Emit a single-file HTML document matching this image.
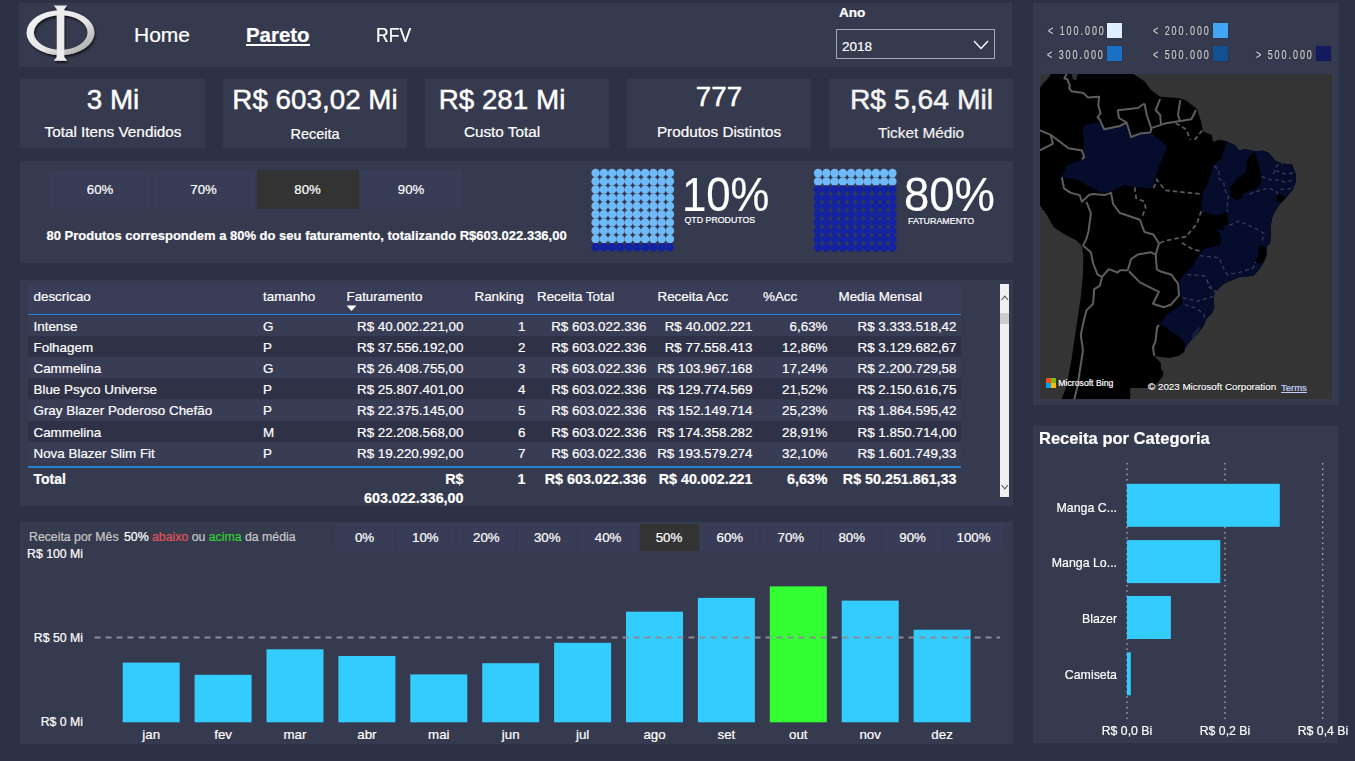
<!DOCTYPE html>
<html><head><meta charset="utf-8">
<style>
*{margin:0;padding:0;box-sizing:border-box}
html,body{width:1355px;height:761px;overflow:hidden;background:#2d3145;font-family:"Liberation Sans",sans-serif;color:#fff}
.a{position:absolute}
.p{position:absolute;background:#363a4e}
.t{position:absolute;white-space:nowrap;line-height:1;-webkit-text-stroke:0.2px currentColor}
.kv{font-size:27.8px;text-align:center;width:300px;-webkit-text-stroke:0.45px #fff}
.kl{font-size:15.3px;text-align:center;width:300px}
.btn{position:absolute;background:#393c56;font-size:13.2px;text-align:center;color:#fff;-webkit-text-stroke:0.2px currentColor}
.sel{background:#333333}
.tb{position:absolute;font-size:13.4px;line-height:1;white-space:nowrap;-webkit-text-stroke:0.2px currentColor}
.r{text-align:right}
</style></head><body>

<!-- header -->
<div class="p" style="left:19px;top:3px;width:993px;height:64px"></div>
<svg class="a" style="left:19px;top:0px" width="90" height="70" viewBox="19 0 90 70">
  <defs>
    <linearGradient id="lg" x1="0" y1="0" x2="1" y2="1">
      <stop offset="0" stop-color="#f4f4f4"/><stop offset="0.55" stop-color="#e6e6e6"/><stop offset="1" stop-color="#9a9a9a"/>
    </linearGradient>
    <filter id="sh" x="-20%" y="-20%" width="140%" height="140%"><feGaussianBlur in="SourceAlpha" stdDeviation="1.2"/><feOffset dx="1" dy="1.5"/><feComponentTransfer><feFuncA type="linear" slope="0.7"/></feComponentTransfer><feMerge><feMergeNode/><feMergeNode in="SourceGraphic"/></feMerge></filter>
  </defs>
  <g filter="url(#sh)">
  <path fill-rule="evenodd" fill="url(#lg)" d="M26.5 32.7 a34 22.5 0 1 0 68 0 a34 22.5 0 1 0 -68 0 Z M33.8 32.5 a26.9 17.3 0 1 1 53.8 0 a26.9 17.3 0 1 1 -53.8 0 Z"/>
  <rect x="56.8" y="8" width="7.4" height="50" fill="#ececec"/>
  <path d="M53.8 5.5 h13.4 l-2.6 3.2 h-8.2 z M53.8 60.7 h13.4 l-2.6 -3.2 h-8.2 z" fill="#ececec"/>
  </g>
</svg>
<div class="t" style="left:134px;top:24px;font-size:21px">Home</div>
<div class="t" style="left:246px;top:24.8px;font-size:20.4px;font-weight:bold">Pareto</div>
<div class="a" style="left:246px;top:43.9px;width:64px;height:1.8px;background:#fff"></div>
<div class="t" style="left:376px;top:24.8px;font-size:20.4px;transform:scaleX(0.86);transform-origin:left">RFV</div>
<div class="t" style="left:839px;top:6px;font-size:13.6px;font-weight:bold">Ano</div>
<div class="a" style="left:836px;top:29px;width:159px;height:30px;border:1.5px solid #a9a9b0"></div>
<div class="t" style="left:842px;top:40px;font-size:13.5px">2018</div>
<svg class="a" style="left:972px;top:39px" width="18" height="12"><path d="M2 2 L9 9.5 L16 2" fill="none" stroke="#fff" stroke-width="1.4"/></svg>

<!-- KPI cards -->
<div class="p" style="left:20px;top:79px;width:185px;height:69px"></div>
<div class="p" style="left:223px;top:79px;width:184px;height:69px"></div>
<div class="p" style="left:425px;top:79px;width:184px;height:69px"></div>
<div class="p" style="left:627px;top:79px;width:184px;height:69px"></div>
<div class="p" style="left:829px;top:79px;width:184px;height:69px"></div>

<div class="t kv" style="left:-37px;top:86px">3 Mi</div>
<div class="t kl" style="left:-37px;top:124px">Total Itens Vendidos</div>
<div class="t kv" style="left:165px;top:86px">R$ 603,02 Mi</div>
<div class="t kl" style="left:165px;top:127px;font-size:14.5px">Receita</div>
<div class="t kv" style="left:352px;top:86px">R$ 281 Mi</div>
<div class="t kl" style="left:352px;top:124px">Custo Total</div>
<div class="t kv" style="left:569px;top:83px">777</div>
<div class="t kl" style="left:569px;top:124px">Produtos Distintos</div>
<div class="t kv" style="left:771.5px;top:85.3px;color:#f2f2f2;font-size:28.3px">R$ 5,64 Mil</div>
<div class="t kl" style="left:771px;top:125px;color:#f2f2f2">Ticket Médio</div>

<!-- pareto panel -->
<div class="p" style="left:20px;top:161px;width:993px;height:102px"></div>
<div class="btn" style="left:49px;top:170px;width:102px;height:39px;line-height:39px">60%</div>
<div class="btn" style="left:152.5px;top:170px;width:102px;height:39px;line-height:39px">70%</div>
<div class="btn sel" style="left:256.5px;top:170px;width:102px;height:39px;line-height:39px">80%</div>
<div class="btn" style="left:360px;top:170px;width:102px;height:39px;line-height:39px">90%</div>
<div class="t" style="left:46.5px;top:229px;font-size:13px;font-weight:bold">80 Produtos correspondem a 80% do seu faturamento, totalizando R$603.022.336,00</div>

<svg class="a" style="left:0;top:0" width="1355" height="761" viewBox="0 0 1355 761">
<circle cx="595.62" cy="172.93" r="4.25" fill="#6fbaf8"/>
<circle cx="603.88" cy="172.93" r="4.25" fill="#6fbaf8"/>
<circle cx="612.12" cy="172.93" r="4.25" fill="#6fbaf8"/>
<circle cx="620.38" cy="172.93" r="4.25" fill="#6fbaf8"/>
<circle cx="628.62" cy="172.93" r="4.25" fill="#6fbaf8"/>
<circle cx="636.88" cy="172.93" r="4.25" fill="#6fbaf8"/>
<circle cx="645.12" cy="172.93" r="4.25" fill="#6fbaf8"/>
<circle cx="653.38" cy="172.93" r="4.25" fill="#6fbaf8"/>
<circle cx="661.62" cy="172.93" r="4.25" fill="#6fbaf8"/>
<circle cx="669.88" cy="172.93" r="4.25" fill="#6fbaf8"/>
<circle cx="595.62" cy="181.18" r="4.25" fill="#6fbaf8"/>
<circle cx="603.88" cy="181.18" r="4.25" fill="#6fbaf8"/>
<circle cx="612.12" cy="181.18" r="4.25" fill="#6fbaf8"/>
<circle cx="620.38" cy="181.18" r="4.25" fill="#6fbaf8"/>
<circle cx="628.62" cy="181.18" r="4.25" fill="#6fbaf8"/>
<circle cx="636.88" cy="181.18" r="4.25" fill="#6fbaf8"/>
<circle cx="645.12" cy="181.18" r="4.25" fill="#6fbaf8"/>
<circle cx="653.38" cy="181.18" r="4.25" fill="#6fbaf8"/>
<circle cx="661.62" cy="181.18" r="4.25" fill="#6fbaf8"/>
<circle cx="669.88" cy="181.18" r="4.25" fill="#6fbaf8"/>
<circle cx="595.62" cy="189.43" r="4.25" fill="#6fbaf8"/>
<circle cx="603.88" cy="189.43" r="4.25" fill="#6fbaf8"/>
<circle cx="612.12" cy="189.43" r="4.25" fill="#6fbaf8"/>
<circle cx="620.38" cy="189.43" r="4.25" fill="#6fbaf8"/>
<circle cx="628.62" cy="189.43" r="4.25" fill="#6fbaf8"/>
<circle cx="636.88" cy="189.43" r="4.25" fill="#6fbaf8"/>
<circle cx="645.12" cy="189.43" r="4.25" fill="#6fbaf8"/>
<circle cx="653.38" cy="189.43" r="4.25" fill="#6fbaf8"/>
<circle cx="661.62" cy="189.43" r="4.25" fill="#6fbaf8"/>
<circle cx="669.88" cy="189.43" r="4.25" fill="#6fbaf8"/>
<circle cx="595.62" cy="197.68" r="4.25" fill="#6fbaf8"/>
<circle cx="603.88" cy="197.68" r="4.25" fill="#6fbaf8"/>
<circle cx="612.12" cy="197.68" r="4.25" fill="#6fbaf8"/>
<circle cx="620.38" cy="197.68" r="4.25" fill="#6fbaf8"/>
<circle cx="628.62" cy="197.68" r="4.25" fill="#6fbaf8"/>
<circle cx="636.88" cy="197.68" r="4.25" fill="#6fbaf8"/>
<circle cx="645.12" cy="197.68" r="4.25" fill="#6fbaf8"/>
<circle cx="653.38" cy="197.68" r="4.25" fill="#6fbaf8"/>
<circle cx="661.62" cy="197.68" r="4.25" fill="#6fbaf8"/>
<circle cx="669.88" cy="197.68" r="4.25" fill="#6fbaf8"/>
<circle cx="595.62" cy="205.93" r="4.25" fill="#6fbaf8"/>
<circle cx="603.88" cy="205.93" r="4.25" fill="#6fbaf8"/>
<circle cx="612.12" cy="205.93" r="4.25" fill="#6fbaf8"/>
<circle cx="620.38" cy="205.93" r="4.25" fill="#6fbaf8"/>
<circle cx="628.62" cy="205.93" r="4.25" fill="#6fbaf8"/>
<circle cx="636.88" cy="205.93" r="4.25" fill="#6fbaf8"/>
<circle cx="645.12" cy="205.93" r="4.25" fill="#6fbaf8"/>
<circle cx="653.38" cy="205.93" r="4.25" fill="#6fbaf8"/>
<circle cx="661.62" cy="205.93" r="4.25" fill="#6fbaf8"/>
<circle cx="669.88" cy="205.93" r="4.25" fill="#6fbaf8"/>
<circle cx="595.62" cy="214.18" r="4.25" fill="#6fbaf8"/>
<circle cx="603.88" cy="214.18" r="4.25" fill="#6fbaf8"/>
<circle cx="612.12" cy="214.18" r="4.25" fill="#6fbaf8"/>
<circle cx="620.38" cy="214.18" r="4.25" fill="#6fbaf8"/>
<circle cx="628.62" cy="214.18" r="4.25" fill="#6fbaf8"/>
<circle cx="636.88" cy="214.18" r="4.25" fill="#6fbaf8"/>
<circle cx="645.12" cy="214.18" r="4.25" fill="#6fbaf8"/>
<circle cx="653.38" cy="214.18" r="4.25" fill="#6fbaf8"/>
<circle cx="661.62" cy="214.18" r="4.25" fill="#6fbaf8"/>
<circle cx="669.88" cy="214.18" r="4.25" fill="#6fbaf8"/>
<circle cx="595.62" cy="222.43" r="4.25" fill="#6fbaf8"/>
<circle cx="603.88" cy="222.43" r="4.25" fill="#6fbaf8"/>
<circle cx="612.12" cy="222.43" r="4.25" fill="#6fbaf8"/>
<circle cx="620.38" cy="222.43" r="4.25" fill="#6fbaf8"/>
<circle cx="628.62" cy="222.43" r="4.25" fill="#6fbaf8"/>
<circle cx="636.88" cy="222.43" r="4.25" fill="#6fbaf8"/>
<circle cx="645.12" cy="222.43" r="4.25" fill="#6fbaf8"/>
<circle cx="653.38" cy="222.43" r="4.25" fill="#6fbaf8"/>
<circle cx="661.62" cy="222.43" r="4.25" fill="#6fbaf8"/>
<circle cx="669.88" cy="222.43" r="4.25" fill="#6fbaf8"/>
<circle cx="595.62" cy="230.68" r="4.25" fill="#6fbaf8"/>
<circle cx="603.88" cy="230.68" r="4.25" fill="#6fbaf8"/>
<circle cx="612.12" cy="230.68" r="4.25" fill="#6fbaf8"/>
<circle cx="620.38" cy="230.68" r="4.25" fill="#6fbaf8"/>
<circle cx="628.62" cy="230.68" r="4.25" fill="#6fbaf8"/>
<circle cx="636.88" cy="230.68" r="4.25" fill="#6fbaf8"/>
<circle cx="645.12" cy="230.68" r="4.25" fill="#6fbaf8"/>
<circle cx="653.38" cy="230.68" r="4.25" fill="#6fbaf8"/>
<circle cx="661.62" cy="230.68" r="4.25" fill="#6fbaf8"/>
<circle cx="669.88" cy="230.68" r="4.25" fill="#6fbaf8"/>
<circle cx="595.62" cy="238.93" r="4.25" fill="#6fbaf8"/>
<circle cx="603.88" cy="238.93" r="4.25" fill="#6fbaf8"/>
<circle cx="612.12" cy="238.93" r="4.25" fill="#6fbaf8"/>
<circle cx="620.38" cy="238.93" r="4.25" fill="#6fbaf8"/>
<circle cx="628.62" cy="238.93" r="4.25" fill="#6fbaf8"/>
<circle cx="636.88" cy="238.93" r="4.25" fill="#6fbaf8"/>
<circle cx="645.12" cy="238.93" r="4.25" fill="#6fbaf8"/>
<circle cx="653.38" cy="238.93" r="4.25" fill="#6fbaf8"/>
<circle cx="661.62" cy="238.93" r="4.25" fill="#6fbaf8"/>
<circle cx="669.88" cy="238.93" r="4.25" fill="#6fbaf8"/>
<circle cx="595.62" cy="247.18" r="4.25" fill="#1222a0"/>
<circle cx="603.88" cy="247.18" r="4.25" fill="#1222a0"/>
<circle cx="612.12" cy="247.18" r="4.25" fill="#1222a0"/>
<circle cx="620.38" cy="247.18" r="4.25" fill="#1222a0"/>
<circle cx="628.62" cy="247.18" r="4.25" fill="#1222a0"/>
<circle cx="636.88" cy="247.18" r="4.25" fill="#1222a0"/>
<circle cx="645.12" cy="247.18" r="4.25" fill="#1222a0"/>
<circle cx="653.38" cy="247.18" r="4.25" fill="#1222a0"/>
<circle cx="661.62" cy="247.18" r="4.25" fill="#1222a0"/>
<circle cx="669.88" cy="247.18" r="4.25" fill="#1222a0"/>
<circle cx="818.12" cy="173.12" r="4.25" fill="#6fbaf8"/>
<circle cx="826.38" cy="173.12" r="4.25" fill="#6fbaf8"/>
<circle cx="834.62" cy="173.12" r="4.25" fill="#6fbaf8"/>
<circle cx="842.88" cy="173.12" r="4.25" fill="#6fbaf8"/>
<circle cx="851.12" cy="173.12" r="4.25" fill="#6fbaf8"/>
<circle cx="859.38" cy="173.12" r="4.25" fill="#6fbaf8"/>
<circle cx="867.62" cy="173.12" r="4.25" fill="#6fbaf8"/>
<circle cx="875.88" cy="173.12" r="4.25" fill="#6fbaf8"/>
<circle cx="884.12" cy="173.12" r="4.25" fill="#6fbaf8"/>
<circle cx="892.38" cy="173.12" r="4.25" fill="#6fbaf8"/>
<circle cx="818.12" cy="181.38" r="4.25" fill="#6fbaf8"/>
<circle cx="826.38" cy="181.38" r="4.25" fill="#6fbaf8"/>
<circle cx="834.62" cy="181.38" r="4.25" fill="#6fbaf8"/>
<circle cx="842.88" cy="181.38" r="4.25" fill="#6fbaf8"/>
<circle cx="851.12" cy="181.38" r="4.25" fill="#6fbaf8"/>
<circle cx="859.38" cy="181.38" r="4.25" fill="#6fbaf8"/>
<circle cx="867.62" cy="181.38" r="4.25" fill="#6fbaf8"/>
<circle cx="875.88" cy="181.38" r="4.25" fill="#6fbaf8"/>
<circle cx="884.12" cy="181.38" r="4.25" fill="#6fbaf8"/>
<circle cx="892.38" cy="181.38" r="4.25" fill="#6fbaf8"/>
<circle cx="818.12" cy="189.62" r="4.25" fill="#1222a0"/>
<circle cx="826.38" cy="189.62" r="4.25" fill="#1222a0"/>
<circle cx="834.62" cy="189.62" r="4.25" fill="#1222a0"/>
<circle cx="842.88" cy="189.62" r="4.25" fill="#1222a0"/>
<circle cx="851.12" cy="189.62" r="4.25" fill="#1222a0"/>
<circle cx="859.38" cy="189.62" r="4.25" fill="#1222a0"/>
<circle cx="867.62" cy="189.62" r="4.25" fill="#1222a0"/>
<circle cx="875.88" cy="189.62" r="4.25" fill="#1222a0"/>
<circle cx="884.12" cy="189.62" r="4.25" fill="#1222a0"/>
<circle cx="892.38" cy="189.62" r="4.25" fill="#1222a0"/>
<circle cx="818.12" cy="197.88" r="4.25" fill="#1222a0"/>
<circle cx="826.38" cy="197.88" r="4.25" fill="#1222a0"/>
<circle cx="834.62" cy="197.88" r="4.25" fill="#1222a0"/>
<circle cx="842.88" cy="197.88" r="4.25" fill="#1222a0"/>
<circle cx="851.12" cy="197.88" r="4.25" fill="#1222a0"/>
<circle cx="859.38" cy="197.88" r="4.25" fill="#1222a0"/>
<circle cx="867.62" cy="197.88" r="4.25" fill="#1222a0"/>
<circle cx="875.88" cy="197.88" r="4.25" fill="#1222a0"/>
<circle cx="884.12" cy="197.88" r="4.25" fill="#1222a0"/>
<circle cx="892.38" cy="197.88" r="4.25" fill="#1222a0"/>
<circle cx="818.12" cy="206.12" r="4.25" fill="#1222a0"/>
<circle cx="826.38" cy="206.12" r="4.25" fill="#1222a0"/>
<circle cx="834.62" cy="206.12" r="4.25" fill="#1222a0"/>
<circle cx="842.88" cy="206.12" r="4.25" fill="#1222a0"/>
<circle cx="851.12" cy="206.12" r="4.25" fill="#1222a0"/>
<circle cx="859.38" cy="206.12" r="4.25" fill="#1222a0"/>
<circle cx="867.62" cy="206.12" r="4.25" fill="#1222a0"/>
<circle cx="875.88" cy="206.12" r="4.25" fill="#1222a0"/>
<circle cx="884.12" cy="206.12" r="4.25" fill="#1222a0"/>
<circle cx="892.38" cy="206.12" r="4.25" fill="#1222a0"/>
<circle cx="818.12" cy="214.38" r="4.25" fill="#1222a0"/>
<circle cx="826.38" cy="214.38" r="4.25" fill="#1222a0"/>
<circle cx="834.62" cy="214.38" r="4.25" fill="#1222a0"/>
<circle cx="842.88" cy="214.38" r="4.25" fill="#1222a0"/>
<circle cx="851.12" cy="214.38" r="4.25" fill="#1222a0"/>
<circle cx="859.38" cy="214.38" r="4.25" fill="#1222a0"/>
<circle cx="867.62" cy="214.38" r="4.25" fill="#1222a0"/>
<circle cx="875.88" cy="214.38" r="4.25" fill="#1222a0"/>
<circle cx="884.12" cy="214.38" r="4.25" fill="#1222a0"/>
<circle cx="892.38" cy="214.38" r="4.25" fill="#1222a0"/>
<circle cx="818.12" cy="222.62" r="4.25" fill="#1222a0"/>
<circle cx="826.38" cy="222.62" r="4.25" fill="#1222a0"/>
<circle cx="834.62" cy="222.62" r="4.25" fill="#1222a0"/>
<circle cx="842.88" cy="222.62" r="4.25" fill="#1222a0"/>
<circle cx="851.12" cy="222.62" r="4.25" fill="#1222a0"/>
<circle cx="859.38" cy="222.62" r="4.25" fill="#1222a0"/>
<circle cx="867.62" cy="222.62" r="4.25" fill="#1222a0"/>
<circle cx="875.88" cy="222.62" r="4.25" fill="#1222a0"/>
<circle cx="884.12" cy="222.62" r="4.25" fill="#1222a0"/>
<circle cx="892.38" cy="222.62" r="4.25" fill="#1222a0"/>
<circle cx="818.12" cy="230.88" r="4.25" fill="#1222a0"/>
<circle cx="826.38" cy="230.88" r="4.25" fill="#1222a0"/>
<circle cx="834.62" cy="230.88" r="4.25" fill="#1222a0"/>
<circle cx="842.88" cy="230.88" r="4.25" fill="#1222a0"/>
<circle cx="851.12" cy="230.88" r="4.25" fill="#1222a0"/>
<circle cx="859.38" cy="230.88" r="4.25" fill="#1222a0"/>
<circle cx="867.62" cy="230.88" r="4.25" fill="#1222a0"/>
<circle cx="875.88" cy="230.88" r="4.25" fill="#1222a0"/>
<circle cx="884.12" cy="230.88" r="4.25" fill="#1222a0"/>
<circle cx="892.38" cy="230.88" r="4.25" fill="#1222a0"/>
<circle cx="818.12" cy="239.12" r="4.25" fill="#1222a0"/>
<circle cx="826.38" cy="239.12" r="4.25" fill="#1222a0"/>
<circle cx="834.62" cy="239.12" r="4.25" fill="#1222a0"/>
<circle cx="842.88" cy="239.12" r="4.25" fill="#1222a0"/>
<circle cx="851.12" cy="239.12" r="4.25" fill="#1222a0"/>
<circle cx="859.38" cy="239.12" r="4.25" fill="#1222a0"/>
<circle cx="867.62" cy="239.12" r="4.25" fill="#1222a0"/>
<circle cx="875.88" cy="239.12" r="4.25" fill="#1222a0"/>
<circle cx="884.12" cy="239.12" r="4.25" fill="#1222a0"/>
<circle cx="892.38" cy="239.12" r="4.25" fill="#1222a0"/>
<circle cx="818.12" cy="247.38" r="4.25" fill="#1222a0"/>
<circle cx="826.38" cy="247.38" r="4.25" fill="#1222a0"/>
<circle cx="834.62" cy="247.38" r="4.25" fill="#1222a0"/>
<circle cx="842.88" cy="247.38" r="4.25" fill="#1222a0"/>
<circle cx="851.12" cy="247.38" r="4.25" fill="#1222a0"/>
<circle cx="859.38" cy="247.38" r="4.25" fill="#1222a0"/>
<circle cx="867.62" cy="247.38" r="4.25" fill="#1222a0"/>
<circle cx="875.88" cy="247.38" r="4.25" fill="#1222a0"/>
<circle cx="884.12" cy="247.38" r="4.25" fill="#1222a0"/>
<circle cx="892.38" cy="247.38" r="4.25" fill="#1222a0"/>
</svg>
<div class="t" style="left:681.8px;top:170.7px;font-size:48px;transform:scaleX(0.91);transform-origin:left">10%</div>
<div class="t" style="left:684.5px;top:216px;font-size:8.8px">QTD PRODUTOS</div>
<div class="t" style="left:903.5px;top:170.7px;font-size:48px;transform:scaleX(0.946);transform-origin:left">80%</div>
<div class="t" style="left:908px;top:217px;font-size:8.9px">FATURAMENTO</div>

<!-- table panel -->
<div class="p" style="left:20px;top:279.5px;width:993px;height:226.5px"></div>
<div class="a" style="left:28px;top:284px;width:933px;height:30px;background:#3a3d57"></div>
<div class="a" style="left:28px;top:314.7px;width:933px;height:21.2px;background:#393c55"></div>
<div class="a" style="left:28px;top:335.9px;width:933px;height:21.2px;background:#2f3247"></div>
<div class="a" style="left:28px;top:357.1px;width:933px;height:21.2px;background:#393c55"></div>
<div class="a" style="left:28px;top:378.3px;width:933px;height:21.2px;background:#2f3247"></div>
<div class="a" style="left:28px;top:399.5px;width:933px;height:21.2px;background:#393c55"></div>
<div class="a" style="left:28px;top:420.7px;width:933px;height:21.2px;background:#2f3247"></div>
<div class="a" style="left:28px;top:441.9px;width:933px;height:21.2px;background:#393c55"></div>
<div class="a" style="left:28px;top:313.6px;width:933px;height:1.6px;background:#2583d6"></div>
<div class="a" style="left:28px;top:466.2px;width:933px;height:1.6px;background:#2583d6"></div>
<div class="tb" style="left:33.5px;top:290px">descricao</div>
<div class="tb" style="left:263px;top:290px">tamanho</div>
<div class="tb" style="left:346.5px;top:290px">Faturamento</div>
<div class="tb" style="left:474.5px;top:290px">Ranking</div>
<div class="tb" style="left:537px;top:290px">Receita Total</div>
<div class="tb" style="left:657.5px;top:290px">Receita Acc</div>
<div class="tb" style="left:763px;top:290px">%Acc</div>
<div class="tb" style="left:838.5px;top:290px">Media Mensal</div>
<svg class="a" style="left:346px;top:305px" width="12" height="8"><path d="M0.5 0.5 L10.5 0.5 L5.5 6 Z" fill="#fff"/></svg>
<div class="tb" style="left:33.5px;top:319.6px">Intense</div>
<div class="tb" style="left:263px;top:319.6px">G</div>
<div class="tb r" style="left:263.5px;width:200px;top:319.6px">R$ 40.002.221,00</div>
<div class="tb r" style="left:325.5px;width:200px;top:319.6px">1</div>
<div class="tb r" style="left:446.5px;width:200px;top:319.6px">R$ 603.022.336</div>
<div class="tb r" style="left:552.5px;width:200px;top:319.6px">R$ 40.002.221</div>
<div class="tb r" style="left:627.5px;width:200px;top:319.6px">6,63%</div>
<div class="tb r" style="left:756.5px;width:200px;top:319.6px">R$ 3.333.518,42</div>
<div class="tb" style="left:33.5px;top:340.8px">Folhagem</div>
<div class="tb" style="left:263px;top:340.8px">P</div>
<div class="tb r" style="left:263.5px;width:200px;top:340.8px">R$ 37.556.192,00</div>
<div class="tb r" style="left:325.5px;width:200px;top:340.8px">2</div>
<div class="tb r" style="left:446.5px;width:200px;top:340.8px">R$ 603.022.336</div>
<div class="tb r" style="left:552.5px;width:200px;top:340.8px">R$ 77.558.413</div>
<div class="tb r" style="left:627.5px;width:200px;top:340.8px">12,86%</div>
<div class="tb r" style="left:756.5px;width:200px;top:340.8px">R$ 3.129.682,67</div>
<div class="tb" style="left:33.5px;top:362.0px">Cammelina</div>
<div class="tb" style="left:263px;top:362.0px">G</div>
<div class="tb r" style="left:263.5px;width:200px;top:362.0px">R$ 26.408.755,00</div>
<div class="tb r" style="left:325.5px;width:200px;top:362.0px">3</div>
<div class="tb r" style="left:446.5px;width:200px;top:362.0px">R$ 603.022.336</div>
<div class="tb r" style="left:552.5px;width:200px;top:362.0px">R$ 103.967.168</div>
<div class="tb r" style="left:627.5px;width:200px;top:362.0px">17,24%</div>
<div class="tb r" style="left:756.5px;width:200px;top:362.0px">R$ 2.200.729,58</div>
<div class="tb" style="left:33.5px;top:383.2px">Blue Psyco Universe</div>
<div class="tb" style="left:263px;top:383.2px">P</div>
<div class="tb r" style="left:263.5px;width:200px;top:383.2px">R$ 25.807.401,00</div>
<div class="tb r" style="left:325.5px;width:200px;top:383.2px">4</div>
<div class="tb r" style="left:446.5px;width:200px;top:383.2px">R$ 603.022.336</div>
<div class="tb r" style="left:552.5px;width:200px;top:383.2px">R$ 129.774.569</div>
<div class="tb r" style="left:627.5px;width:200px;top:383.2px">21,52%</div>
<div class="tb r" style="left:756.5px;width:200px;top:383.2px">R$ 2.150.616,75</div>
<div class="tb" style="left:33.5px;top:404.4px">Gray Blazer Poderoso Chefão</div>
<div class="tb" style="left:263px;top:404.4px">P</div>
<div class="tb r" style="left:263.5px;width:200px;top:404.4px">R$ 22.375.145,00</div>
<div class="tb r" style="left:325.5px;width:200px;top:404.4px">5</div>
<div class="tb r" style="left:446.5px;width:200px;top:404.4px">R$ 603.022.336</div>
<div class="tb r" style="left:552.5px;width:200px;top:404.4px">R$ 152.149.714</div>
<div class="tb r" style="left:627.5px;width:200px;top:404.4px">25,23%</div>
<div class="tb r" style="left:756.5px;width:200px;top:404.4px">R$ 1.864.595,42</div>
<div class="tb" style="left:33.5px;top:425.6px">Cammelina</div>
<div class="tb" style="left:263px;top:425.6px">M</div>
<div class="tb r" style="left:263.5px;width:200px;top:425.6px">R$ 22.208.568,00</div>
<div class="tb r" style="left:325.5px;width:200px;top:425.6px">6</div>
<div class="tb r" style="left:446.5px;width:200px;top:425.6px">R$ 603.022.336</div>
<div class="tb r" style="left:552.5px;width:200px;top:425.6px">R$ 174.358.282</div>
<div class="tb r" style="left:627.5px;width:200px;top:425.6px">28,91%</div>
<div class="tb r" style="left:756.5px;width:200px;top:425.6px">R$ 1.850.714,00</div>
<div class="tb" style="left:33.5px;top:446.8px">Nova Blazer Slim Fit</div>
<div class="tb" style="left:263px;top:446.8px">P</div>
<div class="tb r" style="left:263.5px;width:200px;top:446.8px">R$ 19.220.992,00</div>
<div class="tb r" style="left:325.5px;width:200px;top:446.8px">7</div>
<div class="tb r" style="left:446.5px;width:200px;top:446.8px">R$ 603.022.336</div>
<div class="tb r" style="left:552.5px;width:200px;top:446.8px">R$ 193.579.274</div>
<div class="tb r" style="left:627.5px;width:200px;top:446.8px">32,10%</div>
<div class="tb r" style="left:756.5px;width:200px;top:446.8px">R$ 1.601.749,33</div>
<div class="tb" style="left:33.5px;top:472.0px;font-weight:bold;font-size:14px">Total</div>
<div class="tb r" style="left:263.5px;width:200px;top:472.0px;font-weight:bold;font-size:14.3px">R$</div>
<div class="tb r" style="left:325.5px;width:200px;top:472.0px;font-weight:bold;font-size:14.3px">1</div>
<div class="tb r" style="left:446.5px;width:200px;top:472.0px;font-weight:bold;font-size:14.3px">R$ 603.022.336</div>
<div class="tb r" style="left:552.5px;width:200px;top:472.0px;font-weight:bold;font-size:14.3px">R$ 40.002.221</div>
<div class="tb r" style="left:627.5px;width:200px;top:472.0px;font-weight:bold;font-size:14.3px">6,63%</div>
<div class="tb r" style="left:756.5px;width:200px;top:472.0px;font-weight:bold;font-size:14.3px">R$ 50.251.861,33</div>
<div class="tb r" style="left:263.5px;width:200px;top:491.3px;font-weight:bold;font-size:14.3px">603.022.336,00</div>
<div class="a" style="left:1000px;top:284px;width:9.2px;height:213px;background:#f0f0f0"></div>
<div class="a" style="left:1000px;top:313px;width:9.2px;height:11px;background:#cdcdcd"></div>
<svg class="a" style="left:1000px;top:294px" width="10" height="8"><path d="M1.5 6 L4.8 2.2 L8 6" fill="none" stroke="#555" stroke-width="1.1"/></svg>
<svg class="a" style="left:1000px;top:483px" width="10" height="8"><path d="M1.5 2 L4.8 5.8 L8 2" fill="none" stroke="#555" stroke-width="1.1"/></svg>

<!-- chart panel -->
<div class="p" style="left:20px;top:522px;width:993px;height:222px"></div>
<div class="t" style="left:29px;top:531px;font-size:12.3px;color:#c8c8c8">Receita por Mês <span style="color:#fff;margin-left:2px">50%</span> <span style="color:#e0555c">abaixo</span> ou <span style="color:#2fd12f">acima</span> da média</div>
<div class="t" style="left:27px;top:548px;font-size:12.3px">R$ 100 Mi</div>
<div class="t r" style="left:-117px;width:200px;top:632px;font-size:12.3px">R$ 50 Mi</div>
<div class="t r" style="left:-117px;width:200px;top:716px;font-size:12.3px">R$ 0 Mi</div>
<div class="btn" style="left:335.0px;top:524px;width:59px;height:27px;line-height:28px;font-size:13.3px">0%</div>
<div class="btn" style="left:395.9px;top:524px;width:59px;height:27px;line-height:28px;font-size:13.3px">10%</div>
<div class="btn" style="left:456.8px;top:524px;width:59px;height:27px;line-height:28px;font-size:13.3px">20%</div>
<div class="btn" style="left:517.7px;top:524px;width:59px;height:27px;line-height:28px;font-size:13.3px">30%</div>
<div class="btn" style="left:578.6px;top:524px;width:59px;height:27px;line-height:28px;font-size:13.3px">40%</div>
<div class="btn sel" style="left:639.5px;top:524px;width:59px;height:27px;line-height:28px;font-size:13.3px">50%</div>
<div class="btn" style="left:700.4px;top:524px;width:59px;height:27px;line-height:28px;font-size:13.3px">60%</div>
<div class="btn" style="left:761.3px;top:524px;width:59px;height:27px;line-height:28px;font-size:13.3px">70%</div>
<div class="btn" style="left:822.2px;top:524px;width:59px;height:27px;line-height:28px;font-size:13.3px">80%</div>
<div class="btn" style="left:883.1px;top:524px;width:59px;height:27px;line-height:28px;font-size:13.3px">90%</div>
<div class="btn" style="left:944.0px;top:524px;width:59px;height:27px;line-height:28px;font-size:13.3px">100%</div>
<svg class="a" style="left:0;top:0" width="1355" height="761" viewBox="0 0 1355 761">
<rect x="122.7" y="662.6" width="57" height="59.7" fill="#33ccff"/>
<rect x="194.6" y="674.8" width="57" height="47.5" fill="#33ccff"/>
<rect x="266.5" y="649.3" width="57" height="73.0" fill="#33ccff"/>
<rect x="338.4" y="656" width="57" height="66.3" fill="#33ccff"/>
<rect x="410.3" y="674.4" width="57" height="47.9" fill="#33ccff"/>
<rect x="482.2" y="663.2" width="57" height="59.1" fill="#33ccff"/>
<rect x="554.1" y="642.8" width="57" height="79.5" fill="#33ccff"/>
<rect x="626.0" y="611.7" width="57" height="110.6" fill="#33ccff"/>
<rect x="697.9" y="597.9" width="57" height="124.4" fill="#33ccff"/>
<rect x="769.8" y="586.4" width="57" height="135.9" fill="#33ff33"/>
<rect x="841.7" y="600.6" width="57" height="121.7" fill="#33ccff"/>
<rect x="913.6" y="629.7" width="57" height="92.6" fill="#33ccff"/>
<line x1="94.5" y1="637.5" x2="1000" y2="637.5" stroke="#8a8c95" stroke-width="2.2" stroke-dasharray="6 5"/>
</svg>
<div class="t" style="left:101.2px;width:100px;text-align:center;top:728px;font-size:13.3px">jan</div>
<div class="t" style="left:173.1px;width:100px;text-align:center;top:728px;font-size:13.3px">fev</div>
<div class="t" style="left:245.0px;width:100px;text-align:center;top:728px;font-size:13.3px">mar</div>
<div class="t" style="left:316.9px;width:100px;text-align:center;top:728px;font-size:13.3px">abr</div>
<div class="t" style="left:388.8px;width:100px;text-align:center;top:728px;font-size:13.3px">mai</div>
<div class="t" style="left:460.7px;width:100px;text-align:center;top:728px;font-size:13.3px">jun</div>
<div class="t" style="left:532.6px;width:100px;text-align:center;top:728px;font-size:13.3px">jul</div>
<div class="t" style="left:604.5px;width:100px;text-align:center;top:728px;font-size:13.3px">ago</div>
<div class="t" style="left:676.4px;width:100px;text-align:center;top:728px;font-size:13.3px">set</div>
<div class="t" style="left:748.3px;width:100px;text-align:center;top:728px;font-size:13.3px">out</div>
<div class="t" style="left:820.2px;width:100px;text-align:center;top:728px;font-size:13.3px">nov</div>
<div class="t" style="left:892.1px;width:100px;text-align:center;top:728px;font-size:13.3px">dez</div>

<!-- map panel -->
<div class="p" style="left:1033px;top:3px;width:306px;height:402px"></div>
<svg class="a" style="left:0;top:0" width="1355" height="761" viewBox="0 0 1355 761">
<defs><clipPath id="mc"><rect x="1040" y="74" width="292" height="325"/></clipPath></defs>
<g clip-path="url(#mc)">
<rect x="1040" y="74" width="292" height="325" fill="#343434"/>
<polygon points="1040.0,88.0 1042.3,84.2 1047.8,78.7 1051.0,74.0 1133.3,74.0 1144.5,81.2 1151.2,90.1 1160.1,96.8 1178.0,97.9 1185.2,100.0 1196.7,108.4 1200.9,121.0 1203.0,131.5 1211.8,135.0 1213.0,142.1 1218.9,139.7 1226.0,140.9 1228.4,142.1 1235.5,145.6 1239.0,150.4 1244.9,149.2 1252.0,150.4 1256.7,151.5 1262.6,150.4 1268.6,152.7 1275.6,161.0 1282.7,163.4 1292.2,164.6 1295.7,174.0 1295.7,182.3 1292.2,190.6 1285.1,198.8 1280.4,203.6 1275.6,210.6 1272.1,217.7 1270.9,225.0 1271.0,232.0 1270.0,244.0 1266.5,246.0 1267.0,254.0 1264.0,262.0 1259.0,269.4 1253.6,275.7 1238.9,277.3 1225.2,283.1 1220.4,287.1 1214.5,293.0 1213.3,301.3 1214.5,306.0 1212.1,313.1 1206.2,319.0 1203.9,324.9 1199.1,332.0 1190.9,340.3 1184.9,348.6 1184.3,352.1 1179.0,355.7 1169.6,358.0 1160.1,356.9 1154.2,355.7 1160.7,362.8 1161.3,370.0 1163.4,372.0 1162.9,376.0 1158.8,381.5 1154.2,386.1 1146.8,388.0 1130.2,388.0 1130.2,399.0 1061.8,399.0 1066.3,386.4 1070.8,364.1 1074.1,341.7 1077.5,319.4 1080.8,297.0 1083.0,274.7 1083.3,255.7 1082.1,246.2 1076.2,240.3 1065.6,235.0 1053.7,227.3 1047.2,215.5 1040.0,205.4" fill="#000"/>
<polygon points="1071.5,74 1077.8,74 1076,80.2 1073,79" fill="#343434"/>
<polygon points="1084.2,124.7 1099.8,122.5 1104.3,129.2 1119.9,125.9 1126.6,122.5 1131.1,137.0 1140.0,133.6 1150.5,132.6 1167.3,146.2 1154.7,177.7 1153.7,188.2 1134.6,187.3 1124.4,185.1 1111.0,191.8 1102.0,192.9 1088.6,186.2 1077.5,179.5 1061.8,177.3 1066.3,166.1 1081.9,159.4 1084.2,148.2 1083.0,130.3" fill="#060c2c"/>
<polygon points="1218.9,139.7 1226.0,140.9 1228.4,142.1 1235.5,145.6 1239.0,150.4 1244.9,149.2 1252.0,150.4 1256.7,151.5 1262.6,150.4 1268.6,152.7 1275.6,161.0 1282.7,163.4 1292.2,164.6 1295.7,174.0 1295.7,182.3 1292.2,190.6 1285.1,198.8 1280.4,203.6 1275.6,210.6 1272.1,217.7 1270.9,225.0 1271.0,232.0 1270.0,244.0 1266.5,246.0 1267.0,254.0 1264.0,262.0 1259.0,269.4 1253.6,275.7 1238.9,277.3 1225.2,283.1 1220.4,287.1 1214.5,293.0 1213.3,301.3 1214.5,306.0 1212.1,313.1 1206.2,319.0 1203.9,324.9 1199.1,332.0 1190.9,340.3 1184.9,348.6 1184.3,352.1 1184.3,352.1 1184.9,342.7 1177.8,335.6 1169.6,330.9 1163.7,325.5 1158.9,324.9 1167.2,314.3 1174.3,309.6 1182.0,303.7 1181.4,295.4 1177.8,293.0 1180.2,280.0 1182.1,276.8 1192.6,266.3 1198.9,253.6 1205.2,248.4 1220.0,245.2 1221.0,240.0 1220.0,233.7 1215.8,229.5 1224.2,230.5 1223.1,226.3 1228.4,224.2 1227.2,211.8 1217.7,215.4 1202.4,211.8 1201.2,205.9 1202.4,194.1 1208.3,182.3 1213.0,165.7 1221.3,158.6 1223.6,150.4 1227.2,142.1" fill="#060c2c"/>
<polygon points="1254.4,151.5 1256.7,158.6 1259.1,165.7 1261.5,176.4 1260.3,184.6 1254.4,189.4 1247.3,191.7 1242.6,194.1 1241.4,198.8 1235.5,200.0 1230.7,196.5 1229.6,188.2 1235.5,179.9 1243.7,174.0 1246.1,170.5 1247.3,158.6 1249.6,156.3" fill="#000"/>
<polygon points="1276.8,194.1 1282.7,195.3 1285.1,198.8 1281.6,202.4 1276.8,201.2" fill="#000"/>
<polygon points="1258.9,246.3 1263.1,245.2 1266.2,248.4 1266.2,253.6 1263.1,262.0 1258.9,264.2 1254.7,261.0 1257.8,256.8 1258.9,251.5" fill="#000"/>
<ellipse cx="1196" cy="332.5" rx="2" ry="7" transform="rotate(35 1196 332.5)" fill="#151c42"/>
<polyline points="1066.7,73.9 1064.4,78.3 1067.5,79.5 1069.9,85.8 1069.1,88.1 1071.5,91.3 1083.3,92.9 1088.0,97.6 1099.1,96.8 1098.3,105.5 1100.6,113.4 1097.5,117.3 1099.8,119.7 1103.0,126.8 1104.3,129.2 1119.9,125.9 1126.6,122.5 1131.1,137.0 1140.0,133.6 1150.5,132.6" fill="none" stroke="#5e5e5e" stroke-width="2" stroke-linejoin="round"/>
<polyline points="1117.7,110.2 1137.8,108.0 1144.5,103.5" fill="none" stroke="#5e5e5e" stroke-width="2" stroke-linejoin="round"/>
<polyline points="1117.7,110.2 1119.0,118.0 1126.6,122.5" fill="none" stroke="#5e5e5e" stroke-width="2" stroke-linejoin="round"/>
<polyline points="1144.5,103.5 1146.7,114.7 1151.2,128.1 1150.5,132.6" fill="none" stroke="#5e5e5e" stroke-width="2" stroke-linejoin="round"/>
<polyline points="1151.2,128.1 1164.6,123.6 1191.4,119.2 1195.9,110.0" fill="none" stroke="#5e5e5e" stroke-width="2" stroke-linejoin="round"/>
<polyline points="1160.1,99.0 1155.7,110.2 1160.1,114.7 1161.0,124.0" fill="none" stroke="#5e5e5e" stroke-width="2" stroke-linejoin="round"/>
<polyline points="1180.3,100.2 1178.0,114.7 1180.0,121.0" fill="none" stroke="#5e5e5e" stroke-width="2" stroke-linejoin="round"/>
<polyline points="1040.0,130.3 1050.6,134.8 1052.9,143.7 1040.0,150.4" fill="none" stroke="#5e5e5e" stroke-width="2" stroke-linejoin="round"/>
<polyline points="1050.6,134.8 1068.5,148.2 1081.9,150.4 1084.2,157.2 1081.9,159.4" fill="none" stroke="#5e5e5e" stroke-width="2" stroke-linejoin="round"/>
<polyline points="1061.8,177.3 1064.0,188.4 1070.8,192.9 1079.7,195.1 1081.9,201.8 1089.0,195.0 1093.0,194.0 1104.3,195.1 1111.0,192.9 1113.2,204.1 1119.9,213.0 1140.0,219.7 1142.3,226.4 1144.5,232.0 1153.4,234.5 1159.0,243.4 1155.7,254.6" fill="none" stroke="#5e5e5e" stroke-width="2" stroke-linejoin="round"/>
<polyline points="1086.4,201.8 1090.9,213.0 1088.6,230.9 1086.4,238.9 1083.0,245.6" fill="none" stroke="#5e5e5e" stroke-width="2" stroke-linejoin="round"/>
<polyline points="1083.0,245.6 1090.9,252.3 1093.1,263.5 1097.6,274.7 1102.0,276.9 1099.8,285.9 1094.2,289.2 1093.1,303.7 1086.4,310.4 1083.0,323.9 1080.8,335.0 1083.0,350.7 1080.8,364.1 1077.5,386.4 1074.1,400.0" fill="none" stroke="#5e5e5e" stroke-width="2" stroke-linejoin="round"/>
<polyline points="1102.0,276.9 1108.7,269.1 1117.7,272.5 1119.9,270.2 1127.7,270.2 1131.1,259.0 1137.8,254.6 1151.2,252.3 1155.7,254.6 1156.8,269.1 1160.1,271.3 1171.3,274.7 1178.0,283.6 1179.0,295.4 1170.7,304.8 1163.7,307.2 1153.0,303.7 1158.9,291.8 1140.0,282.4 1128.9,271.3" fill="none" stroke="#5e5e5e" stroke-width="2" stroke-linejoin="round"/>
<polyline points="1158.9,324.9 1157.1,327.3 1155.4,341.5 1153.0,347.4 1154.2,355.7" fill="none" stroke="#5e5e5e" stroke-width="2" stroke-linejoin="round"/>
<polyline points="1175.7,123.1 1186.2,129.4 1190.4,139.9" fill="none" stroke="#5a5a5a" stroke-width="1.8" stroke-dasharray="4.5 3"/>
<polyline points="1194.6,139.9 1203.0,129.4" fill="none" stroke="#5a5a5a" stroke-width="1.8" stroke-dasharray="4.5 3"/>
<polyline points="1153.7,188.2 1156.8,179.8 1165.2,190.3 1202.4,194.1" fill="none" stroke="#5a5a5a" stroke-width="1.8" stroke-dasharray="4.5 3"/>
<polyline points="1134.6,187.3 1136.2,198.4 1144.1,201.5 1145.6,207.8 1142.5,215.7" fill="none" stroke="#5a5a5a" stroke-width="1.8" stroke-dasharray="4.5 3"/>
<polyline points="1201.2,211.3 1196.7,224.0 1186.2,236.6 1165.2,240.8 1159.0,243.4" fill="none" stroke="#5a5a5a" stroke-width="1.8" stroke-dasharray="4.5 3"/>
<polyline points="1182.0,242.9 1192.5,249.2 1200.9,251.3" fill="none" stroke="#5a5a5a" stroke-width="1.8" stroke-dasharray="4.5 3"/>
<polyline points="1214.2,165.7 1218.9,170.5 1218.9,178.7 1223.6,182.3 1224.8,189.4 1228.4,196.5 1227.2,205.9 1227.2,211.8" fill="none" stroke="#363c58" stroke-width="1.3" stroke-dasharray="4 3"/>
<polyline points="1261.5,176.4 1270.9,179.9 1278.0,179.9 1285.1,182.3 1294.6,179.9" fill="none" stroke="#363c58" stroke-width="1.3" stroke-dasharray="4 3"/>
<polyline points="1249.6,194.1 1259.1,190.6 1268.6,188.2 1275.6,190.6 1278.0,194.1" fill="none" stroke="#363c58" stroke-width="1.3" stroke-dasharray="4 3"/>
<polyline points="1273.3,174.0 1276.8,165.7 1282.7,163.4" fill="none" stroke="#363c58" stroke-width="1.3" stroke-dasharray="4 3"/>
<polyline points="1275.6,170.5 1285.1,174.0 1294.6,172.8" fill="none" stroke="#363c58" stroke-width="1.3" stroke-dasharray="4 3"/>
<polyline points="1280.4,189.4 1294.6,188.2" fill="none" stroke="#363c58" stroke-width="1.3" stroke-dasharray="4 3"/>
<polyline points="1229.4,225.3 1238.9,221.0 1248.4,225.3 1257.8,229.5 1264.1,233.7 1262.0,241.0" fill="none" stroke="#363c58" stroke-width="1.3" stroke-dasharray="4 3"/>
<polyline points="1200.0,255.7 1218.9,257.8 1224.2,269.4 1227.3,274.7 1238.9,272.5 1252.6,268.3 1255.7,262.0" fill="none" stroke="#363c58" stroke-width="1.3" stroke-dasharray="4 3"/>
<polyline points="1187.4,274.7 1204.2,275.7 1208.4,283.1 1214.7,292.5" fill="none" stroke="#363c58" stroke-width="1.3" stroke-dasharray="4 3"/>
<polyline points="1182.6,297.7 1196.8,301.3 1213.3,296.6" fill="none" stroke="#363c58" stroke-width="1.3" stroke-dasharray="4 3"/>
<polyline points="1184.9,304.8 1196.8,308.4 1203.9,314.3 1205.0,319.0" fill="none" stroke="#363c58" stroke-width="1.3" stroke-dasharray="4 3"/>
<polyline points="1207.4,280.0 1208.6,287.1 1216.9,291.8" fill="none" stroke="#363c58" stroke-width="1.3" stroke-dasharray="4 3"/>
</g></svg>
<div class="t" style="left:1048px;top:25.1px;font-size:12.5px;letter-spacing:2.7px;color:#d2d2d6;text-shadow:0 0 1.5px #111;transform:scaleX(0.72);transform-origin:left">&lt; 100.000</div>
<div class="a" style="left:1107.2px;top:23.2px;width:15px;height:14.7px;background:#deefff;box-shadow:0 0 1px rgba(0,0,0,0.5)"></div>
<div class="t" style="left:1153.2px;top:25.1px;font-size:12.5px;letter-spacing:2.7px;color:#d2d2d6;text-shadow:0 0 1.5px #111;transform:scaleX(0.72);transform-origin:left">&lt; 200.000</div>
<div class="a" style="left:1212.8px;top:23.2px;width:15px;height:14.7px;background:#42a5f5;box-shadow:0 0 1px rgba(0,0,0,0.5)"></div>
<div class="t" style="left:1046.6px;top:48.7px;font-size:12.5px;letter-spacing:2.7px;color:#d2d2d6;text-shadow:0 0 1.5px #111;transform:scaleX(0.72);transform-origin:left">&lt; 300.000</div>
<div class="a" style="left:1107.2px;top:46px;width:15px;height:14.7px;background:#1a70c6;box-shadow:0 0 1px rgba(0,0,0,0.5)"></div>
<div class="t" style="left:1153.2px;top:48.7px;font-size:12.5px;letter-spacing:2.7px;color:#d2d2d6;text-shadow:0 0 1.5px #111;transform:scaleX(0.72);transform-origin:left">&lt; 500.000</div>
<div class="a" style="left:1212.8px;top:46px;width:15px;height:14.7px;background:#135092;box-shadow:0 0 1px rgba(0,0,0,0.5)"></div>
<div class="t" style="left:1255.6px;top:48.7px;font-size:12.5px;letter-spacing:2.7px;color:#d2d2d6;text-shadow:0 0 1.5px #111;transform:scaleX(0.72);transform-origin:left">&gt; 500.000</div>
<div class="a" style="left:1315.5px;top:46px;width:15px;height:14.7px;background:#141a5e;box-shadow:0 0 1px rgba(0,0,0,0.5)"></div>
<div class="a" style="left:1046px;top:377.5px;width:5px;height:5px;background:#f25022"></div>
<div class="a" style="left:1051.3px;top:377.5px;width:5px;height:5px;background:#7fba00"></div>
<div class="a" style="left:1046px;top:382.8px;width:5px;height:5px;background:#00a4ef"></div>
<div class="a" style="left:1051.3px;top:382.8px;width:5px;height:5px;background:#ffb900"></div>
<div class="t" style="left:1058.3px;top:378.5px;font-size:8.7px;color:#fff">Microsoft Bing</div>
<div class="t" style="left:1148px;top:381.8px;font-size:9.8px;color:#fff;letter-spacing:0px;text-shadow:0 0 1px #000,0 0 1px #000">© 2023 Microsoft Corporation</div>
<div class="t" style="left:1281px;top:382.5px;font-size:9.5px;color:#c8d0ff;text-decoration:underline">Terms</div>

<!-- category panel -->
<div class="p" style="left:1033px;top:426px;width:305px;height:317px"></div>
<div class="t" style="left:1039.2px;top:430.3px;font-size:17px;font-weight:bold;transform:scaleX(0.972);transform-origin:left">Receita por Categoria</div>
<svg class="a" style="left:0;top:0" width="1355" height="761" viewBox="0 0 1355 761">
<line x1="1127" y1="463" x2="1127" y2="720" stroke="#b4b6bd" stroke-width="1.2" stroke-dasharray="1.6 3.7"/>
<line x1="1225" y1="463" x2="1225" y2="720" stroke="#b4b6bd" stroke-width="1.2" stroke-dasharray="1.6 3.7"/>
<line x1="1322.7" y1="463" x2="1322.7" y2="720" stroke="#b4b6bd" stroke-width="1.2" stroke-dasharray="1.6 3.7"/>
<rect x="1127" y="483.8" width="152.8" height="43" fill="#33ccff"/>
<rect x="1127" y="540.1" width="93.3" height="43" fill="#33ccff"/>
<rect x="1127" y="596" width="43.9" height="43" fill="#33ccff"/>
<rect x="1127" y="652.3" width="3.8" height="43" fill="#33ccff"/>
</svg>
<div class="t r" style="left:917px;width:200px;top:500.6px;font-size:13px;transform:scaleX(0.95);transform-origin:right">Manga C...</div>
<div class="t r" style="left:917px;width:200px;top:556.1px;font-size:13px;transform:scaleX(0.95);transform-origin:right">Manga Lo...</div>
<div class="t r" style="left:917px;width:200px;top:612.1px;font-size:13px;transform:scaleX(0.95);transform-origin:right">Blazer</div>
<div class="t r" style="left:917px;width:200px;top:668.1px;font-size:13px;transform:scaleX(0.95);transform-origin:right">Camiseta</div>
<div class="t" style="left:1077px;width:100px;text-align:center;top:724.5px;font-size:12.8px;transform:scaleX(0.96)">R$ 0,0 Bi</div>
<div class="t" style="left:1175px;width:100px;text-align:center;top:724.5px;font-size:12.8px;transform:scaleX(0.96)">R$ 0,2 Bi</div>
<div class="t" style="left:1272.5px;width:100px;text-align:center;top:724.5px;font-size:12.8px;transform:scaleX(0.96)">R$ 0,4 Bi</div>

</body></html>
